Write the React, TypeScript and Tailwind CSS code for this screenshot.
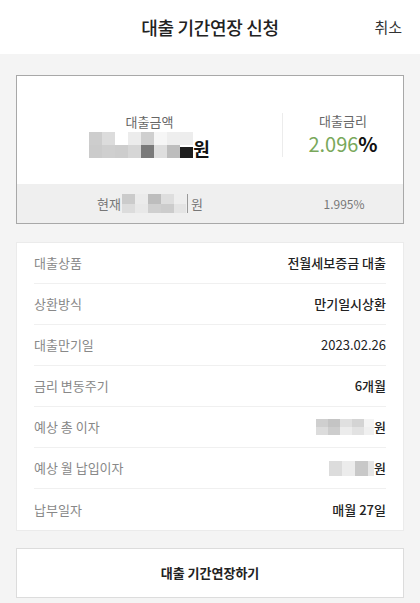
import React from "react";

const font = { fontFamily: '"Noto Sans CJK KR", "Noto Sans", sans-serif' };

const rows: { label: string; value: React.ReactNode; light?: boolean }[] = [
  { label: "대출상품", value: "전월세보증금 대출" },
  { label: "상환방식", value: "만기일시상환" },
  { label: "대출만기일", value: "2023.02.26", light: true },
  { label: "금리 변동주기", value: "6개월" },
  {
    label: "예상 총 이자",
    value: (
      <span className="flex items-center">
        <span className="grid grid-cols-[12px_12px_12px_12px_10px] grid-rows-[8px_8px]">
          <span className="bg-[#cfcfcf]" />
          <span className="bg-[#c4c4c4]" />
          <span className="bg-[#e0e0e0]" />
          <span className="bg-[#d4d4d4]" />
          <span className="bg-[#f4f4f4]" />
          <span className="bg-[#dcdcdc]" />
          <span className="bg-[#cdcdcd]" />
          <span className="bg-[#ececec]" />
          <span className="bg-[#e2e2e2]" />
          <span className="bg-[#f0f0f0]" />
        </span>
        <span>원</span>
      </span>
    ),
  },
  {
    label: "예상 월 납입이자",
    value: (
      <span className="flex items-center">
        <span className="grid grid-cols-[13px_13px_13px_6px] grid-rows-[15px]">
          <span className="bg-[#dcdcdc]" />
          <span className="bg-[#ececec]" />
          <span className="bg-[#c8c8c8]" />
          <span className="bg-[#e6e6e6]" />
        </span>
        <span>원</span>
      </span>
    ),
  },
  { label: "납부일자", value: "매월 27일" },
];

export default function App() {
  return (
    <div className="w-[420px] h-[603px] bg-[#f4f4f4] flex flex-col text-[#222]" style={font}>
      <header className="h-[54px] bg-white relative flex items-center justify-center shrink-0">
        <span className="text-[18px] font-medium text-[#222] tracking-[-0.3px]">대출 기간연장 신청</span>
        <span className="absolute right-[18px] top-[16px] text-[15px] text-[#333]">취소</span>
      </header>

      <div className="px-4 pt-[21px]">
        <div className="border border-[#a8a8a8] bg-white">
          <div className="h-[108px] flex items-center">
            <div className="flex-1 flex flex-col items-center pt-[10px]">
              <span className="text-[13px] text-[#666] leading-[18px]">대출금액</span>
              <div className="flex items-end mt-[1px]">
                <div className="grid grid-cols-[13px_13px_13px_13px_13px_13px_13px_13px] grid-rows-[13px_13px]">
                  <div className="bg-[#cdcdcd]" />
                  <div className="bg-[#dcdcdc]" />
                  <div className="bg-white" />
                  <div className="bg-[#ececec]" />
                  <div className="bg-[#cfcfcf]" />
                  <div className="bg-[#f6f6f6]" />
                  <div className="bg-[#eeeeee]" />
                  <div className="bg-[#ededed]" />
                  <div className="bg-[#cbcbcb]" />
                  <div className="bg-[#cfcfcf]" />
                  <div className="bg-[#cdcdcd]" />
                  <div className="bg-[#d6d6d6]" />
                  <div className="bg-[#7a7a7a]" />
                  <div className="bg-[#dedede]" />
                  <div className="bg-[#bdbdbd]" />
                  <div className="bg-[#1e1e1e] mt-[2px]" />
                </div>
                <span className="text-[18px] font-bold leading-[24px] text-[#111] -mb-[2px]">원</span>
              </div>
            </div>
            <div className="w-px h-[44px] bg-[#ececec] mt-[10px]" />
            <div className="w-[120px] flex flex-col items-center pt-[10px]">
              <span className="text-[13px] text-[#666] leading-[18px]">대출금리</span>
              <span className="text-[20px] leading-[28px]">
                <span className="text-[#79a85b]">2.096</span>
                <span className="text-[#111] font-bold">%</span>
              </span>
            </div>
          </div>
          <div className="h-[39px] bg-[#efefef] flex items-center">
            <div className="flex-1 flex items-center justify-center text-[13px] text-[#777]">
              <span>현재</span>
              <div className="grid grid-cols-[13px_13px_13px_13px_12px] grid-rows-[10px_9px] mx-[1px]">
                <div className="bg-[#cbcbcb]" />
                <div className="bg-[#ebebeb]" />
                <div className="bg-[#bdbdbd]" />
                <div className="bg-[#dedede]" />
                <div className="bg-[#eeeeee]" />
                <div className="bg-[#dcdcdc]" />
                <div className="bg-[#e8e8e8]" />
                <div className="bg-[#cfcfcf]" />
                <div className="bg-[#cccccc]" />
                <div className="bg-[#e4e4e4]" />
              </div>
              <div className="w-px h-[19px] bg-[#999] mr-[3px]" />
              <span>원</span>
            </div>
            <div className="w-[120px] text-center text-[12px] text-[#777] pl-[2px]">1.995%</div>
          </div>
        </div>

        <div className="mt-[18px] bg-white border border-[#ebebeb] px-[17px]">
          {rows.map((r, i) => (
            <div
              key={r.label}
              className={`h-[41px] flex items-center justify-between ${i < rows.length - 1 ? "border-b border-[#f0f0f0]" : ""}`}
            >
              <span className="text-[13px] text-[#888]">{r.label}</span>
              <span className={`text-[13px] text-[#222] ${r.light ? "font-normal" : "font-medium"}`}>{r.value}</span>
            </div>
          ))}
        </div>

        <button className="mt-[17px] w-full h-[50px] bg-white border border-[#dcdcdc] flex items-center justify-center text-[13px] font-bold text-[#222]">
          대출 기간연장하기
        </button>
      </div>
    </div>
  );
}
